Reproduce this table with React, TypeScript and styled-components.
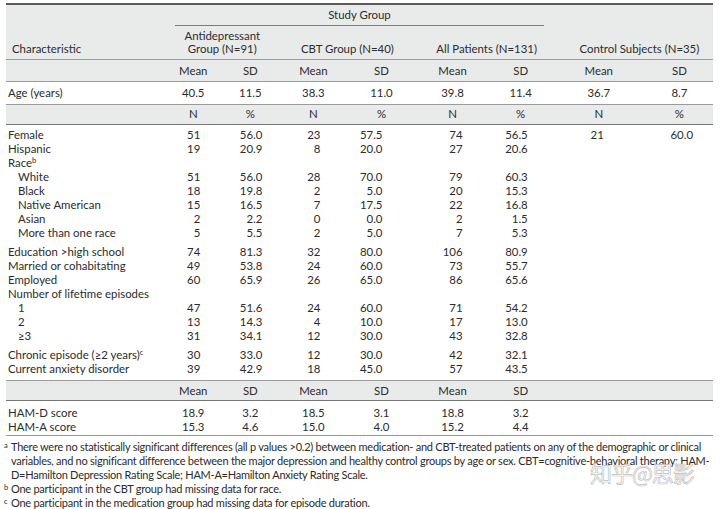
import styled, { createGlobalStyle } from 'styled-components'

const GlobalStyle = createGlobalStyle`
  body {
    margin: 0;
    background: #fff;
  }
`

const cols = [159, 56, 58, 68, 68, 74, 62, 94, 67]
// right padding for N / % values so they line up the way the journal table does
const countPad = [21, 17, 27, 33, 27, 24, 42, 20]

const Page = styled.div`
  position: relative;
  width: 714px;
  height: 509px;
  overflow: hidden;
  padding: 3px 0 0 6px;
  font-family: Lato, 'Liberation Sans', sans-serif;
  color: #2b2b2b;
`

const Table = styled.table`
  width: 707px;
  border-collapse: collapse;
  table-layout: fixed;
  border-top: 2px solid #5a5a5a;
  font-size: 11.4px;
  line-height: 13px;
`

const HeadRow = styled.tr<{ $rule?: string }>`
  background: #e9ebea;
  ${p => (p.$rule ? `border-bottom: 1px solid ${p.$rule};` : '')}
`

const HeadCell = styled.th<{ $align?: string; $pl?: number; $rule?: boolean }>`
  font-weight: 400;
  text-align: ${p => p.$align || 'center'};
  vertical-align: bottom;
  padding: 3px 0 4px ${p => p.$pl || 0}px;
  white-space: nowrap;
  ${p => (p.$rule ? 'border-bottom: 1px solid #9a9a9a;' : '')}
`

const StudyLabel = styled.div`
  margin: 0 8px 0 10px;
  padding: 0 0 4px;
  border-bottom: 1px solid #7a7a7a;
`

const SubHead = styled.th<{ $pt?: number; $pb?: number }>`
  font-weight: 400;
  text-align: center;
  padding: ${p => p.$pt ?? 4}px 0 ${p => p.$pb ?? 4}px;
`

const BodyRow = styled.tr<{ $pt?: number; $pb?: number; $rule?: string }>`
  & > td {
    padding-top: ${p => p.$pt || 0}px;
    padding-bottom: ${p => p.$pb || 0}px;
    line-height: 14px;
  }
  ${p => (p.$rule ? `border-bottom: 1px solid ${p.$rule};` : '')}
`

const Label = styled.td<{ $indent?: boolean }>`
  padding-left: ${p => (p.$indent ? 12 : 2)}px;
  white-space: nowrap;
`

const Value = styled.td`
  text-align: center;
`

const Count = styled.td<{ $pr: number }>`
  text-align: right;
  padding-right: ${p => p.$pr}px;
`

const Sup = styled.sup`
  font-size: 7.5px;
  line-height: 0;
  vertical-align: 4px;
`

const Notes = styled.div`
  margin-left: -2px;
  padding-top: 4px;
  font-size: 11px;
  letter-spacing: -0.25px;
  line-height: 14px;
`

const Note = styled.div`
  padding-left: 7px;
  white-space: nowrap;
`

const Marker = styled.span`
  display: inline-block;
  width: 7px;
  margin-left: -7px;
  font-size: 7.5px;
  line-height: 0;
  position: relative;
  top: -3px;
`

const Watermark = styled.div`
  position: absolute;
  left: 590px;
  top: 456px;
  font-family: 'Noto Sans CJK SC', sans-serif;
  font-size: 22px;
  letter-spacing: -1px;
  color: rgba(255, 255, 255, 0.75);
  -webkit-text-stroke: 0.7px #c2c2c2;
  pointer-events: none;
`

type Row = {
  label: string
  sup?: string
  indent?: boolean
  gap?: boolean
  values?: string[]
}

const rows: Row[] = [
  { label: 'Female', values: ['51', '56.0', '23', '57.5', '74', '56.5', '21', '60.0'] },
  { label: 'Hispanic', values: ['19', '20.9', '8', '20.0', '27', '20.6'] },
  { label: 'Race', sup: 'b' },
  { label: 'White', indent: true, values: ['51', '56.0', '28', '70.0', '79', '60.3'] },
  { label: 'Black', indent: true, values: ['18', '19.8', '2', '5.0', '20', '15.3'] },
  { label: 'Native American', indent: true, values: ['15', '16.5', '7', '17.5', '22', '16.8'] },
  { label: 'Asian', indent: true, values: ['2', '2.2', '0', '0.0', '2', '1.5'] },
  { label: 'More than one race', indent: true, values: ['5', '5.5', '2', '5.0', '7', '5.3'] },
  { label: 'Education >high school', gap: true, values: ['74', '81.3', '32', '80.0', '106', '80.9'] },
  { label: 'Married or cohabitating', values: ['49', '53.8', '24', '60.0', '73', '55.7'] },
  { label: 'Employed', values: ['60', '65.9', '26', '65.0', '86', '65.6'] },
  { label: 'Number of lifetime episodes' },
  { label: '1', indent: true, values: ['47', '51.6', '24', '60.0', '71', '54.2'] },
  { label: '2', indent: true, values: ['13', '14.3', '4', '10.0', '17', '13.0'] },
  { label: '≥3', indent: true, values: ['31', '34.1', '12', '30.0', '43', '32.8'] },
  { label: 'Chronic episode (≥2 years)', sup: 'c', gap: true, values: ['30', '33.0', '12', '30.0', '42', '32.1'] },
  { label: 'Current anxiety disorder', values: ['39', '42.9', '18', '45.0', '57', '43.5'] },
]

const scores = [
  { label: 'HAM-D score', values: ['18.9', '3.2', '18.5', '3.1', '18.8', '3.2'] },
  { label: 'HAM-A score', values: ['15.3', '4.6', '15.0', '4.0', '15.2', '4.4'] },
]

const meanSd = ['Mean', 'SD', 'Mean', 'SD', 'Mean', 'SD', 'Mean', 'SD']
const nPct = ['N', '%', 'N', '%', 'N', '%', 'N', '%']
const age = ['40.5', '11.5', '38.3', '11.0', '39.8', '11.4', '36.7', '8.7']

export default function App () {
  return (
    <Page>
      <GlobalStyle />
      <Table>
        <colgroup>
          {cols.map((w, i) => <col key={i} style={{ width: w }} />)}
        </colgroup>
        <thead>
          <HeadRow>
            <HeadCell rowSpan={2} $align='left' $pl={6} $rule>Characteristic</HeadCell>
            <HeadCell colSpan={6} style={{ padding: '3px 0 0' }}>
              <StudyLabel>Study Group</StudyLabel>
            </HeadCell>
            <HeadCell colSpan={2} rowSpan={2} $pl={14} $rule>Control Subjects (N=35)</HeadCell>
          </HeadRow>
          <HeadRow $rule='#9a9a9a'>
            <HeadCell colSpan={2} $rule>Antidepressant<br />Group (N=91)</HeadCell>
            <HeadCell colSpan={2} $rule>CBT Group (N=40)</HeadCell>
            <HeadCell colSpan={2} $pl={6} $rule>All Patients (N=131)</HeadCell>
          </HeadRow>
          <HeadRow $rule='#9a9a9a'>
            <SubHead />
            {meanSd.map((t, i) => <SubHead key={i}>{t}</SubHead>)}
          </HeadRow>
        </thead>
        <tbody>
          <BodyRow $pt={4} $pb={4} $rule='#9a9a9a'>
            <Label>Age (years)</Label>
            {age.map((v, i) => <Value key={i}>{v}</Value>)}
          </BodyRow>
          <HeadRow $rule='#777'>
            <SubHead $pt={2} $pb={4} />
            {nPct.map((t, i) => <SubHead key={i} $pt={2} $pb={4}>{t}</SubHead>)}
          </HeadRow>
          {rows.map((r, ri) => (
            <BodyRow
              key={r.label}
              $pt={ri === 0 ? 3 : r.gap ? 5 : 0}
              $pb={ri === rows.length - 1 ? 4 : 0}
              $rule={ri === rows.length - 1 ? '#9a9a9a' : undefined}
            >
              <Label $indent={r.indent}>
                {r.label}
                {r.sup && <Sup>{r.sup}</Sup>}
              </Label>
              {countPad.map((pr, i) => (
                <Count key={i} $pr={pr}>{r.values?.[i] ?? ''}</Count>
              ))}
            </BodyRow>
          ))}
          <HeadRow $rule='#777'>
            <SubHead $pt={3} $pb={3} />
            {meanSd.slice(0, 6).map((t, i) => <SubHead key={i} $pt={3} $pb={3}>{t}</SubHead>)}
            <SubHead colSpan={2} />
          </HeadRow>
          {scores.map((s, si) => (
            <BodyRow
              key={s.label}
              $pt={si === 0 ? 5 : 0}
              $pb={si === scores.length - 1 ? 1 : 0}
              $rule={si === scores.length - 1 ? '#9a9a9a' : undefined}
            >
              <Label>{s.label}</Label>
              {s.values.map((v, i) => <Value key={i}>{v}</Value>)}
              <Value colSpan={2} />
            </BodyRow>
          ))}
        </tbody>
      </Table>
      <Notes>
        <Note>
          <Marker>a</Marker>There were no statistically significant differences (all p values &gt;0.2) between medication- and CBT-treated patients on any of the demographic or clinical
          <br />
          variables, and no significant difference between the major depression and healthy control groups by age or sex. CBT=cognitive-behavioral therapy; HAM-
          <br />
          D=Hamilton Depression Rating Scale; HAM-A=Hamilton Anxiety Rating Scale.
        </Note>
        <Note><Marker>b</Marker>One participant in the CBT group had missing data for race.</Note>
        <Note><Marker>c</Marker>One participant in the medication group had missing data for episode duration.</Note>
      </Notes>
      <Watermark>知乎@思影</Watermark>
    </Page>
  )
}
